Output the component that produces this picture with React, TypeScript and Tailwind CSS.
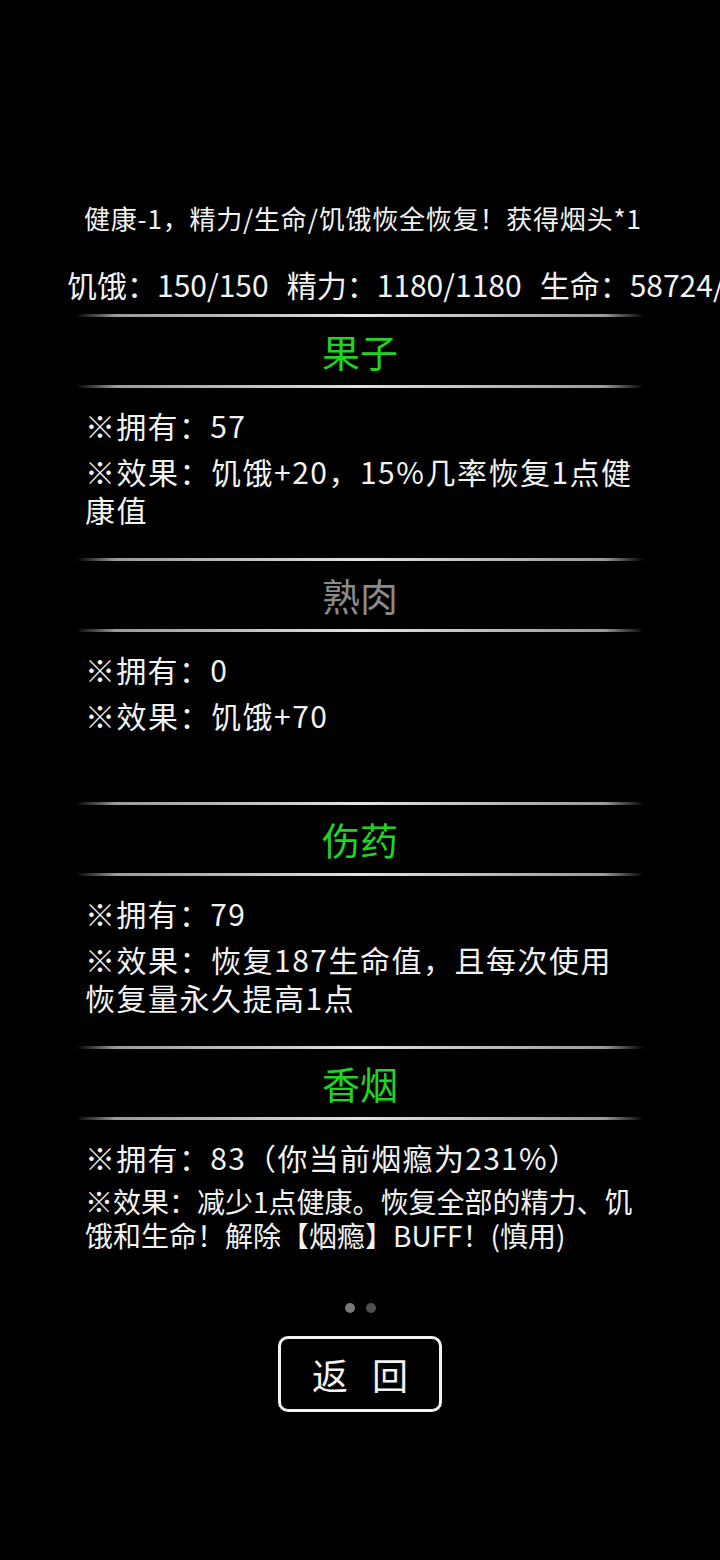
const font = { fontFamily: '"Noto Sans CJK SC", "Noto Sans", sans-serif' }

interface Item {
  name: string
  active: boolean
  owned: string
  effect: string[]
  small?: boolean
}

const items: Item[] = [
  { name: '果子', active: true, owned: '57', effect: ['※效果：饥饿+20，15%几率恢复1点健', '康值'] },
  { name: '熟肉', active: false, owned: '0', effect: ['※效果：饥饿+70'] },
  { name: '伤药', active: true, owned: '79', effect: ['※效果：恢复187生命值，且每次使用', '恢复量永久提高1点'] },
  {
    name: '香烟',
    active: true,
    owned: '83（你当前烟瘾为231%）',
    effect: ['※效果：减少1点健康。恢复全部的精力、饥', '饿和生命！解除【烟瘾】BUFF！(慎用)'],
    small: true,
  },
]

function Divider() {
  return (
    <div className="mx-auto h-[3px] w-[568px] bg-[linear-gradient(to_right,transparent,#9a9a9a_7%,#e2e2e2_50%,#9a9a9a_93%,transparent)]" />
  )
}

function Section({ item }: { item: Item }) {
  return (
    <div>
      <Divider />
      <div
        className={
          'flex h-[68px] items-center justify-center text-[38px] leading-none ' +
          (item.active ? 'text-[#22d422]' : 'text-[#8a8a8a]')
        }
      >
        {item.name}
      </div>
      <Divider />
      <div className="mx-auto h-[170px] w-[568px] pl-[9px] pt-[18px] text-[#f2f2f2]">
        <div className="whitespace-nowrap text-[30px] leading-[38px] tracking-[1.3px]">※拥有：{item.owned}</div>
        <div
          className={
            'mt-[8px] whitespace-nowrap ' +
            (item.small ? 'text-[28px] leading-[34px]' : 'text-[30px] leading-[38px] tracking-[1.5px]')
          }
        >
          {item.effect.map((line) => (
            <div key={line}>{line}</div>
          ))}
        </div>
      </div>
    </div>
  )
}

export default function App() {
  return (
    <div className="min-h-[1560px] w-[720px] overflow-hidden bg-black pt-[200px]" style={font}>
      <div className="pl-[84px] whitespace-nowrap text-[26px] leading-[36px] tracking-[0.8px] text-[#f2f2f2]">
        健康-1，精力/生命/饥饿恢全恢复！获得烟头*1
      </div>
      <div className="mt-[28px] flex whitespace-nowrap pl-[67px] text-[30px] leading-[40px] text-[#f2f2f2]">
        <span>饥饿：150/150</span>
        <span className="ml-[18px]">精力：1180/1180</span>
        <span className="ml-[18px]">生命：58724/58724</span>
      </div>
      <div className="mt-[10px]">
        {items.map((item) => (
          <Section key={item.name} item={item} />
        ))}
      </div>
      <div className="mt-[13px] flex justify-center gap-[11px]">
        <span className="h-[10px] w-[10px] rounded-full bg-[#7a7a7a]" />
        <span className="h-[10px] w-[10px] rounded-full bg-[#505050]" />
      </div>
      <div className="mt-[23px] flex justify-center">
        <button className="flex h-[76px] w-[164px] items-center justify-center gap-[24px] rounded-[10px] border-[3px] border-[#f2f2f2] text-[36px] leading-none text-[#f2f2f2]">
          <span>返</span>
          <span>回</span>
        </button>
      </div>
    </div>
  )
}
